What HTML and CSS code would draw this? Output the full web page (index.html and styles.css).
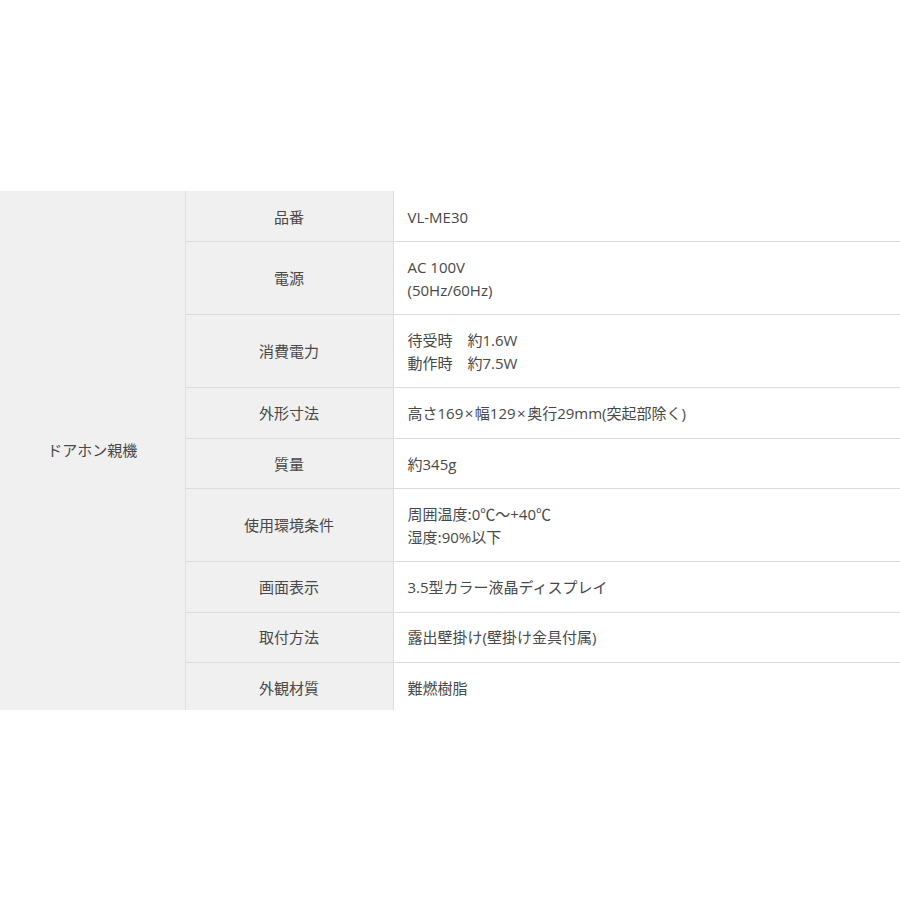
FILE: index.html
```html
<!DOCTYPE html>
<html lang="ja">
<head>
<meta charset="utf-8">
<link rel="stylesheet" href="styles.css">
</head>
<body>
<div class="page">
<table class="spec">
  <colgroup>
    <col class="c-group">
    <col class="c-label">
    <col>
  </colgroup>
  <tbody>
    <tr class="first">
      <th class="group" rowspan="9">ドアホン親機</th>
      <th class="label">品番</th>
      <td class="value">VL-ME30</td>
    </tr>
    <tr>
      <th class="label">電源</th>
      <td class="value">AC 100V<br>(50Hz/60Hz)</td>
    </tr>
    <tr>
      <th class="label">消費電力</th>
      <td class="value">待受時　約1.6W<br>動作時　約7.5W</td>
    </tr>
    <tr>
      <th class="label">外形寸法</th>
      <td class="value">高さ169<span class="times">×</span>幅129<span class="times">×</span>奥行29mm(突起部除く)</td>
    </tr>
    <tr>
      <th class="label">質量</th>
      <td class="value">約345g</td>
    </tr>
    <tr>
      <th class="label">使用環境条件</th>
      <td class="value">周囲温度<span class="cjk">:</span>0<span class="cjk">℃～</span>+40<span class="cjk">℃</span><br>湿度<span class="cjk">:</span>90%以下</td>
    </tr>
    <tr>
      <th class="label">画面表示</th>
      <td class="value">3.5型カラー液晶ディスプレイ</td>
    </tr>
    <tr>
      <th class="label">取付方法</th>
      <td class="value">露出壁掛け(壁掛け金具付属)</td>
    </tr>
    <tr class="last">
      <th class="label">外観材質</th>
      <td class="value">難燃樹脂</td>
    </tr>
  </tbody>
</table>
</div>
</body>
</html>
```
FILE: styles.css
```css
html, body {
  margin: 0;
  padding: 0;
  background: #fff;
}
body {
  font-family: "Open Sans", "Noto Sans CJK JP", sans-serif;
  font-size: 15px;
  color: #484848;
}
.page {
  padding-top: 191px;
}
.spec {
  width: 900px;
  border-collapse: collapse;
  table-layout: fixed;
}
.c-group {
  width: 185px;
}
.c-label {
  width: 208px;
}
.spec th, .spec td {
  font-weight: normal;
  line-height: 22.5px;
  padding: 13.6px 14px 13.4px;
  vertical-align: middle;
}
.spec tr.first .label,
.spec tr.first .value {
  padding-top: 14.6px;
}
.cjk {
  font-family: "Noto Sans CJK JP", sans-serif;
  line-height: 1;
}
.times {
  padding: 0 1.5px;
}
.spec .group {
  background: #f0f0f0;
  text-align: center;
  padding: 0;
  border-right: 1px solid #e0e0e0;
}
.spec .label {
  background: #f0f0f0;
  text-align: center;
  border-bottom: 1px solid #dcdcdc;
  border-right: 1px solid #dcdcdc;
}
.spec .value {
  text-align: left;
  border-bottom: 1px solid #dcdcdc;
}
.spec tr.last .label,
.spec tr.last .value {
  border-bottom: none;
  padding-bottom: 11px;
}
```
